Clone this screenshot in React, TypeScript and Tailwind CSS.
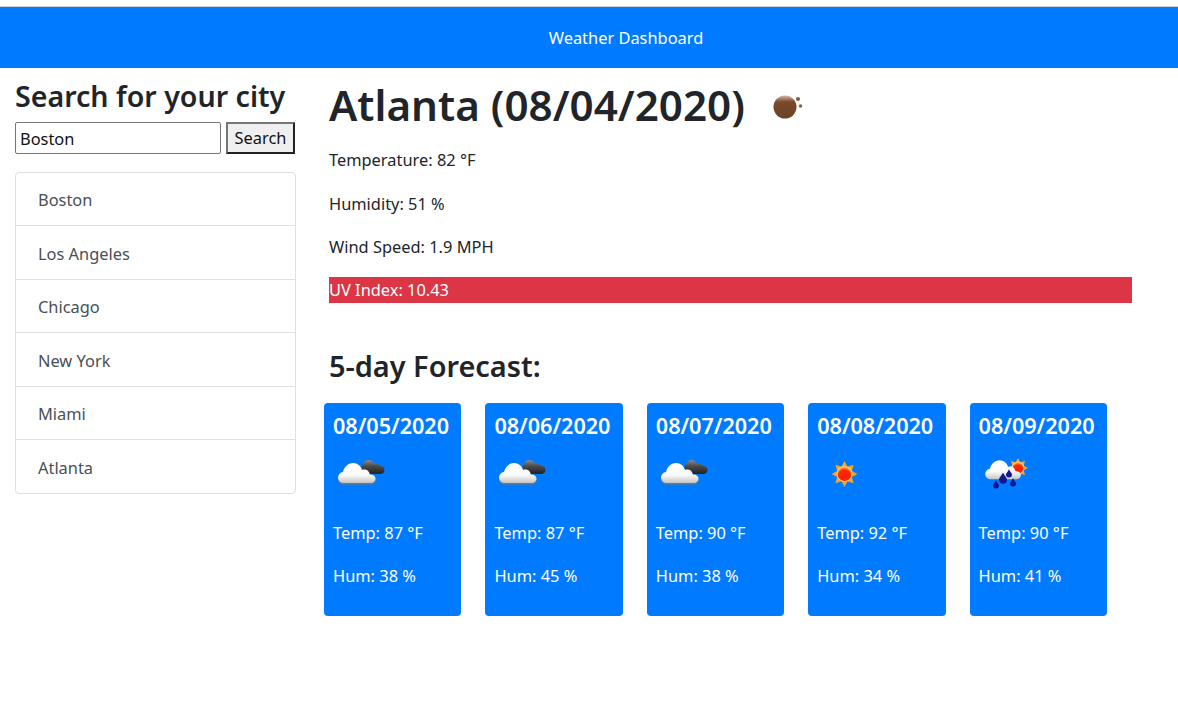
const cities = ["Boston", "Los Angeles", "Chicago", "New York", "Miami", "Atlanta"];

type IconKind = "cloudy" | "sun" | "rain";

const forecast: { date: string; temp: number; hum: number; icon: IconKind }[] = [
  { date: "08/05/2020", temp: 87, hum: 38, icon: "cloudy" },
  { date: "08/06/2020", temp: 87, hum: 45, icon: "cloudy" },
  { date: "08/07/2020", temp: 90, hum: 38, icon: "cloudy" },
  { date: "08/08/2020", temp: 92, hum: 34, icon: "sun" },
  { date: "08/09/2020", temp: 90, hum: 41, icon: "rain" },
];

const CLOUD =
  "M11 34a5.500 5.500 0 0 1-1-11C11 18 15 14 20 14c4.500 0 8 3 9 7 2-1 5-.5 6.500 1.500.8 1 1.200 2 1.300 3 3-.3 5.700 1.500 5.700 4 0 2.500-2 4.500-5 4.500z";

function Sun({ cx, cy, r, rays }: { cx: number; cy: number; r: number; rays: number }) {
  const angles = Array.from({ length: 8 }, (_, i) => i * 45);
  return (
    <g>
      {angles.map((deg) => (
        <polygon
          key={deg}
          points={`${cx - r * 0.45},${cy - r} ${cx + r * 0.45},${cy - r} ${cx},${cy - rays}`}
          fill="#f5a623"
          transform={`rotate(${deg} ${cx} ${cy})`}
        />
      ))}
      <circle cx={cx} cy={cy} r={r + 0.8} fill="#ffd9a0" />
      <circle cx={cx} cy={cy} r={r} fill="url(#sunFill)" />
    </g>
  );
}

function Drop({ x, y, s }: { x: number; y: number; s: number }) {
  return (
    <path
      d={`M${x} ${y - s * 1.6}C${x + s * 0.4} ${y - s * 0.7} ${x + s} ${y - s * 0.3} ${x + s} ${y + s * 0.2}A${s} ${s} 0 0 1 ${x - s} ${y + s * 0.2}C${x - s} ${y - s * 0.3} ${x - s * 0.4} ${y - s * 0.7} ${x} ${y - s * 1.6}z`}
      fill="#10178f"
    />
  );
}

function Defs() {
  return (
    <defs>
      <linearGradient id="cloudFill" x1="0" y1="0" x2="0" y2="1">
        <stop offset="0" stopColor="#ffffff" />
        <stop offset="0.6" stopColor="#fbfbfb" />
        <stop offset="1" stopColor="#c4c4c4" />
      </linearGradient>
      <linearGradient id="darkFill" x1="0" y1="0" x2="0" y2="1">
        <stop offset="0" stopColor="#8a8a8a" />
        <stop offset="0.45" stopColor="#4a4a4a" />
        <stop offset="1" stopColor="#222222" />
      </linearGradient>
      <radialGradient id="sunFill" cx="0.5" cy="0.65" r="0.6">
        <stop offset="0" stopColor="#ff1a00" />
        <stop offset="0.7" stopColor="#f52a00" />
        <stop offset="1" stopColor="#ff9a20" />
      </radialGradient>
    </defs>
  );
}

function WeatherIcon({ kind }: { kind: IconKind }) {
  return (
    <svg width="60" height="50" viewBox="0 0 60 50" className="block">
      <Defs />
      {kind === "cloudy" && (
        <g>
          <path
            d="M28.500 20c.5-5 3-9 7-9 3 0 5 2 5.500 4 2.500-1 5 0 6 2 2.500 0 4.500 1.500 4.500 4 0 2.500-2 4-4.500 4h-12z"
            fill="url(#darkFill)"
          />
          <path d={CLOUD} fill="#777777" transform="translate(0 1.500)" />
          <path d={CLOUD} fill="url(#cloudFill)" />
        </g>
      )}
      {kind === "sun" && <Sun cx={27.500} cy={25} r={7} rays={13} />}
      {kind === "rain" && (
        <g>
          <Sun cx={39} cy={19} r={5.500} rays={10} />
          <path d={CLOUD} fill="url(#cloudFill)" transform="translate(1.500 -2) scale(0.95)" />
          <Drop x={17} y={36} s={3} />
          <Drop x={24} y={30} s={4} />
          <Drop x={30} y={25} s={3} />
          <Drop x={34} y={34} s={3} />
        </g>
      )}
    </svg>
  );
}

function MoonIcon() {
  return (
    <svg width="50" height="50" viewBox="0 0 50 50" className="block">
      <defs>
        <linearGradient id="ballFill" x1="0" y1="0" x2="0" y2="1">
          <stop offset="0" stopColor="#d9b8a4" />
          <stop offset="0.28" stopColor="#7a4a2c" />
          <stop offset="1" stopColor="#6b4228" />
        </linearGradient>
      </defs>
      <circle cx="23" cy="25" r="11.500" fill="url(#ballFill)" />
      <circle cx="36" cy="17" r="2" fill="#7f5a44" />
      <circle cx="38.500" cy="24" r="1.700" fill="#7f5a44" />
    </svg>
  );
}

export default function App() {
  return (
    <div className="min-h-[718px] bg-white text-[#212529] text-[16.400px] font-['Noto_Sans','Open_Sans',sans-serif]">
      <div className="h-[7px] border-b border-[#d4d4d4]" />
      <header className="h-[61px] bg-[#007bff] flex items-center justify-center pl-[74px] pt-[2px] text-white">
        Weather Dashboard
      </header>

      <div className="flex">
        <aside className="w-[296px] shrink-0 pl-[15px]">
          <h2 className="mt-[8px] text-[28.600px] leading-[40px] font-semibold whitespace-nowrap">
            Search for your city
          </h2>
          <div className="mt-[6px] flex gap-[5px]">
            <input
              defaultValue="Boston"
              className="w-[206px] h-[32px] border border-[#767676] rounded-[2px] px-1 pt-[1px] text-[#111] outline-none"
            />
            <button className="w-[69px] h-[32px] bg-[#efefef] border-2 border-t-[#767676] border-l-[#767676] border-r-[#222] border-b-[#222] text-[#111] leading-none">
              Search
            </button>
          </div>
          <ul className="mt-[18px] border border-[#dfdfdf] rounded-[4px]">
            {cities.map((city) => (
              <li
                key={city}
                className="h-[53.400px] flex items-center pl-[22px] pt-[3px] text-[#495057] border-b border-[#dfdfdf] last:border-b-0"
              >
                {city}
              </li>
            ))}
          </ul>
        </aside>

        <main className="flex-1 pl-[33px] pr-[46px]">
          <div className="flex items-start h-[72px]">
            <h1 className="mt-[8px] text-[42.200px] leading-[58px] font-semibold whitespace-nowrap">
              Atlanta (08/04/2020)
            </h1>
            <div className="ml-[17px] mt-[14px]">
              <MoonIcon />
            </div>
          </div>
          <div className="mt-[8px]">
            <p className="leading-6 mb-[19.500px]">Temperature: 82 °F</p>
            <p className="leading-6 mb-[19.500px]">Humidity: 51 %</p>
            <p className="leading-6 mb-[18px]">Wind Speed: 1.9 MPH</p>
            <p className="h-[26px] leading-[26px] bg-[#dc3545] text-white">UV Index: 10.43</p>
          </div>
          <h3 className="mt-[43px] text-[28.900px] leading-[40px] font-semibold">5-day Forecast:</h3>

          <div className="-ml-[5px] mt-[17px] flex gap-[24px]">
            {forecast.map((day) => (
              <div
                key={day.date}
                className="w-[137.400px] h-[213px] bg-[#007bff] rounded-[4px] text-white px-[9px] pt-[8px]"
              >
                <div className="text-[21.600px] leading-[30px] font-semibold whitespace-nowrap">{day.date}</div>
                <div className="mt-[8px] h-[50px]">
                  <WeatherIcon kind={day.icon} />
                </div>
                <div className="mt-[22px]">
                  <div className="leading-6">Temp: {day.temp} °F</div>
                  <div className="mt-[19px] leading-6">Hum: {day.hum} %</div>
                </div>
              </div>
            ))}
          </div>
        </main>
      </div>
    </div>
  );
}
